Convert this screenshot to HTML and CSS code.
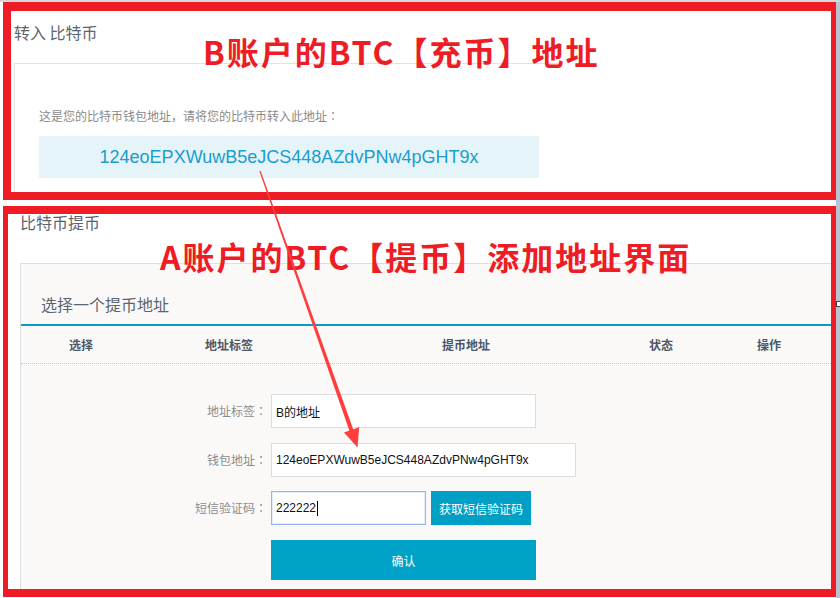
FILE: index.html
```html
<!DOCTYPE html>
<html lang="zh-CN">
<head>
<meta charset="utf-8">
<title>BTC 充币 / 提币</title>
<link rel="stylesheet" href="styles.css">
</head>
<body>
<div class="topbar"></div>
<div class="page">
  <section class="box box1">
    <h2 class="title">转入 比特币</h2>
    <div class="deposit">
      <p class="hint">这是您的比特币钱包地址，请将您的比特币转入此地址<span class="colon" lang="zh-TW">：</span></p>
      <div class="addr">124eoEPXWuwB5eJCS448AZdvPNw4pGHT9x</div>
    </div>
  </section>

  <section class="box box2">
    <h2 class="title">比特币提币</h2>
    <div class="withdraw">
      <h3 class="sel-head">选择一个提币地址</h3>
      <div class="thead">
        <span>选择</span>
        <span>地址标签</span>
        <span>提币地址</span>
        <span>状态</span>
        <span>操作</span>
      </div>
      <div class="form">
        <div class="row r1">
          <span class="label">地址标签<span class="colon" lang="zh-TW">：</span></span>
          <div class="field w1">B的地址</div>
        </div>
        <div class="row r2">
          <span class="label">钱包地址<span class="colon" lang="zh-TW">：</span></span>
          <div class="field w2">124eoEPXWuwB5eJCS448AZdvPNw4pGHT9x</div>
        </div>
        <div class="row r3">
          <span class="label">短信验证码<span class="colon" lang="zh-TW">：</span></span>
          <div class="field w3 focus">222222<span class="caret"></span></div>
          <button class="sms" type="button">获取短信验证码</button>
        </div>
        <div class="row">
          <button class="confirm" type="button">确认</button>
        </div>
      </div>
    </div>
  </section>

  <div class="note n1">B账户的BTC【充币】地址</div>
  <div class="note n2">A账户的BTC【提币】添加地址界面</div>

  <svg class="arrow" width="836" height="596" viewBox="0 0 836 596" xmlns="http://www.w3.org/2000/svg">
    <polygon points="260.6,168.8 259.4,169.2 350.1,430.7 353.9,429.3" fill="#ff3d3d"/>
    <polygon points="357.5,445.5 359.2,425.2 344.0,430.6" fill="#ff3d3d"/>
  </svg>
  <span class="scrollmark"></span>
</div>
</body>
</html>
```

FILE: styles.css
```css
body {
  margin: 0;
  background: #b7c4d3;
  font-family: "Noto Sans CJK SC", sans-serif;
}

.topbar {
  height: 2px;
  background: #d5d9df;
}

.page {
  position: relative;
  width: 836px;
  height: 596px;
  background: #fff;
  padding-left: 3px;
  box-sizing: border-box;
}

.box {
  box-sizing: border-box;
  width: 833px;
  border-style: solid;
  border-color: #ee1c25;
  display: flex;
  flex-direction: column;
}

.box1 {
  height: 198px;
  border-width: 9px 5px 8px 8px;
}

.box2 {
  height: 391px;
  margin-top: 6px;
  border-width: 8px 5px 8px 5px;
}

.title {
  margin: 0;
  font-weight: normal;
  font-size: 16px;
  line-height: 16px;
  color: #5b6570;
}

.box1 .title {
  margin-top: 13px;
  padding-left: 3px;
}

.box2 .title {
  padding-left: 12px;
}

.colon {
  font-family: "Noto Sans CJK TC", sans-serif;
}

.deposit {
  margin: 23px 0 0 3px;
  width: 545px;
  flex: 1;
  box-sizing: border-box;
  border-top: 1px solid #e2e2e2;
  border-left: 1px solid #e2e2e2;
  padding: 43px 0 0 24px;
}

.hint {
  margin: 0;
  font-size: 12px;
  line-height: 17px;
  color: #8a8a8a;
}

.addr {
  margin-top: 12px;
  width: 500px;
  height: 42px;
  line-height: 42px;
  text-align: center;
  background: #e5f4f9;
  color: #1b9dcf;
  font-family: "Liberation Sans", sans-serif;
  font-size: 18px;
}

.withdraw {
  margin: 33px 0 0 12px;
  flex: 1;
  background: #faf9f8;
  border-top: 1px solid #dedede;
  border-left: 1px solid #dedede;
}

.sel-head {
  margin: 0;
  padding: 30px 20px 10px;
  font-size: 16px;
  line-height: 20px;
  font-weight: normal;
  color: #5b6570;
  border-bottom: 2px solid #0a9ac4;
}

.thead {
  display: grid;
  grid-template-columns: 120px 176px 298px 92px 124px;
  height: 37px;
  line-height: 37px;
  border-bottom: 1px dotted #c4c4c4;
  font-size: 12px;
  font-weight: bold;
  color: #4d5766;
  text-align: center;
}

.form {
  padding-top: 30px;
}

.row {
  display: flex;
  align-items: center;
}

.r1 { margin-bottom: 15px; }
.r2 { margin-bottom: 14px; }
.r3 { margin-bottom: 15px; }

.label {
  width: 250px;
  padding-right: 4px;
  box-sizing: border-box;
  text-align: right;
  font-size: 12px;
  line-height: 16px;
  color: #8c8c8c;
}

.field {
  height: 34px;
  box-sizing: border-box;
  border: 1px solid #dcdcdc;
  background: #fff;
  padding-left: 4px;
  display: flex;
  align-items: center;
  font-family: "Liberation Sans", "Noto Sans CJK SC", sans-serif;
  font-size: 12px;
  color: #111;
}

.w1 { width: 265px; }
.w2 { width: 305px; }
.w3 { width: 155px; }

.focus {
  border-color: #94b6f0;
  box-shadow: inset 0 0 0 1px #e3ecfc;
}

.caret {
  display: inline-block;
  width: 1px;
  height: 15px;
  background: #000;
  margin-left: 1px;
}

.sms {
  margin-left: 5px;
  width: 100px;
  height: 34px;
  border: 0;
  padding: 0;
  background: #00a0c6;
  color: #fff;
  font-family: "Noto Sans CJK SC", sans-serif;
  font-size: 12px;
}

.confirm {
  margin-left: 250px;
  width: 265px;
  height: 40px;
  border: 0;
  padding: 0;
  background: #00a2c7;
  color: #fff;
  font-family: "Noto Sans CJK SC", sans-serif;
  font-size: 12px;
}

.note {
  position: absolute;
  font-size: 32px;
  line-height: 32px;
  font-weight: bold;
  color: #ee1c25;
  letter-spacing: 2px;
  white-space: nowrap;
}

.n1 { left: 203px; top: 33px; }
.n2 { left: 160px; top: 238px; }

.arrow {
  position: absolute;
  left: 0;
  top: 0;
}

.scrollmark {
  position: absolute;
  left: 836px;
  top: 299px;
  width: 3px;
  height: 4px;
  background: #fff;
  border: 1px solid #444;
  border-right: 0;
}
```
